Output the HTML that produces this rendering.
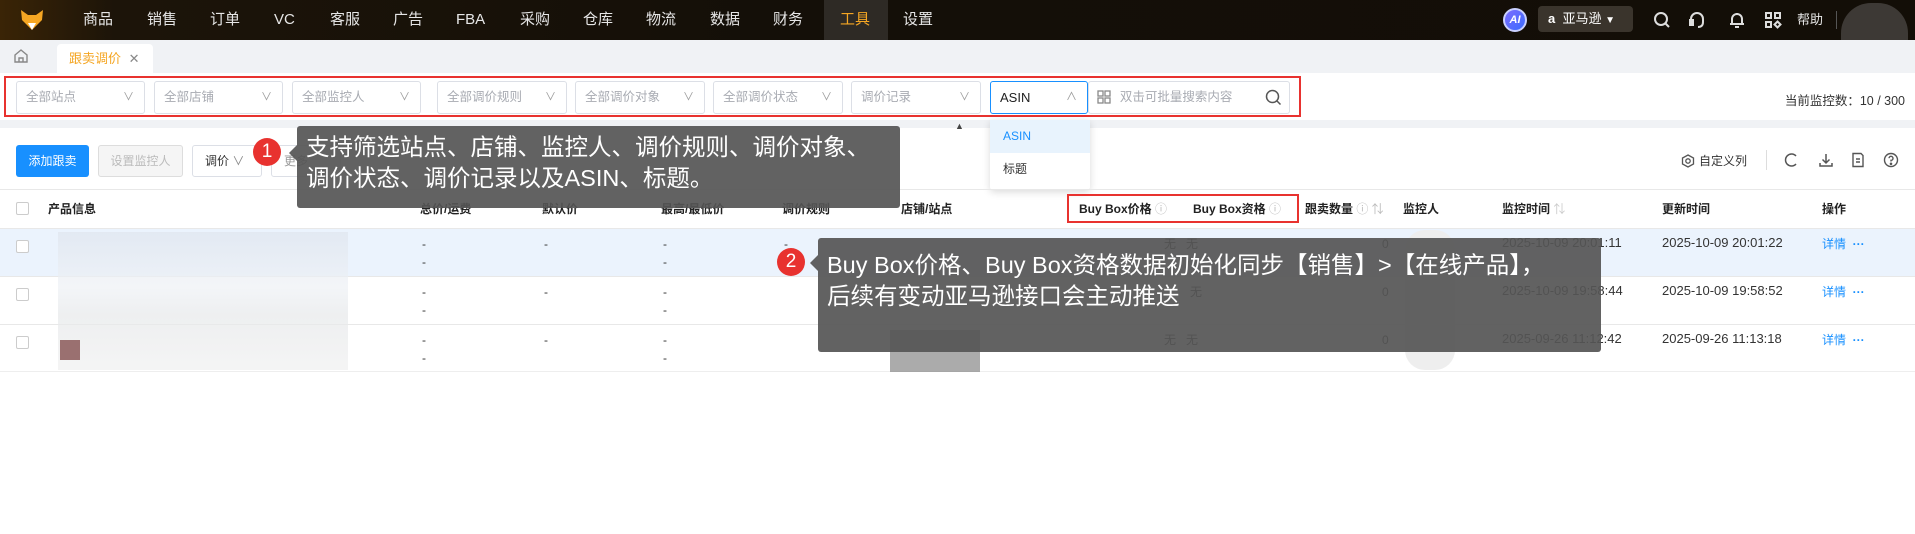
<!DOCTYPE html>
<html><head><meta charset="utf-8"><style>
*{box-sizing:border-box;margin:0;padding:0}
body{width:1915px;height:534px;overflow:hidden;background:#fff;font-family:"Liberation Sans","Noto Sans CJK SC",sans-serif;position:relative;color:#333}
.a{position:absolute}
.nav{left:0;top:0;width:1915px;height:40px;background:linear-gradient(90deg,#3a2406 0,#1c1409 6%,#140f08 40%,#130e07 100%)}
.ni{top:0;height:40px;line-height:40px;color:#e6e6e6;font-size:15px}
.tabs{left:0;top:40px;width:1915px;height:33px;background:#f0f2f5}
.sel{top:81px;height:33px;border:1px solid #dcdfe6;border-radius:3px;font-size:12.5px;color:#a8abb2;line-height:31px;padding-left:9px;background:#fff}
.sel i{position:absolute;right:10px;top:0;font-style:normal;color:#999;font-size:11px}
.th{top:200px;font-size:12px;font-weight:bold;color:#222}
.td{font-size:12px;color:#333;line-height:18px}
.tip{background:rgba(85,85,85,.92);color:#fff;font-size:23.5px;line-height:31px;border-radius:3px;white-space:nowrap}
.badge{width:28px;height:28px;border-radius:50%;background:#e8322f;color:#fff;font-size:19px;line-height:28px;text-align:center}
.cb{width:13px;height:13px;border:1px solid #ccc;border-radius:2px;background:#fff}
.blur{background:#e4e6ea}
</style></head><body>
<div class="a nav"></div>
<svg class="a" style="left:20px;top:8px" width="24" height="24" viewBox="0 0 24 24"><path d="M1 2 L8 7 L16 7 L23 2 L22 12 L12 22 L2 12Z" fill="#f5a623"/><path d="M8 15 L12 22 L16 15Z" fill="#fff"/></svg>
<div class="a ni" style="left:83px">商品</div>
<div class="a ni" style="left:147px">销售</div>
<div class="a ni" style="left:210px">订单</div>
<div class="a ni" style="left:274px">VC</div>
<div class="a ni" style="left:330px">客服</div>
<div class="a ni" style="left:393px">广告</div>
<div class="a ni" style="left:456px">FBA</div>
<div class="a ni" style="left:520px">采购</div>
<div class="a ni" style="left:583px">仓库</div>
<div class="a ni" style="left:646px">物流</div>
<div class="a ni" style="left:710px">数据</div>
<div class="a ni" style="left:773px">财务</div>
<div class="a" style="left:824px;top:0;width:64px;height:40px;background:#2e2a25"></div>
<div class="a ni" style="left:840px;color:#f5a623">工具</div>
<div class="a ni" style="left:903px">设置</div>
<div class="a" style="left:1503px;top:8px;width:24px;height:24px;border-radius:50%;background:linear-gradient(135deg,#7c6cff,#3a6bff);border:2px solid #c9d0ff;color:#fff;font-size:11px;font-weight:bold;text-align:center;line-height:20px;font-style:italic">AI</div>
<div class="a" style="left:1538px;top:6px;width:95px;height:26px;background:#3a342c;border-radius:4px;color:#fff;font-size:13px;line-height:26px;padding-left:10px"><b>a</b>&nbsp; 亚马逊 <span style="font-size:10px">▼</span></div>
<svg class="a" style="left:1653px;top:11px" width="18" height="18" viewBox="0 0 18 18" fill="none" stroke="#ddd" stroke-width="2"><circle cx="8" cy="8" r="6"/><path d="M12.5 12.5 L16 16"/></svg>
<svg class="a" style="left:1688px;top:11px" width="18" height="18" viewBox="0 0 18 18" fill="none" stroke="#ddd" stroke-width="2"><path d="M3 11 V8 a6 6 0 0 1 12 0 V11"/><rect x="2" y="9" width="3" height="5" fill="#ddd"/><path d="M15 11 Q15 16 10 16"/></svg>
<svg class="a" style="left:1728px;top:11px" width="18" height="18" viewBox="0 0 18 18" fill="none" stroke="#ddd" stroke-width="2"><path d="M4 13 V8 a5 5 0 0 1 10 0 V13 Z M2 13 H16 M9 2 V3 M7 16 H11"/></svg>
<svg class="a" style="left:1764px;top:11px" width="18" height="18" viewBox="0 0 18 18" fill="none" stroke="#ddd" stroke-width="2"><rect x="2" y="2" width="5" height="5"/><rect x="11" y="2" width="5" height="5"/><rect x="2" y="11" width="5" height="5"/><path d="M13.5 10.5 L16.5 13.5 L13.5 16.5 L10.5 13.5Z"/></svg>
<div class="a ni" style="left:1797px;font-size:13px">帮助</div>
<div class="a" style="left:1836px;top:11px;width:1px;height:18px;background:#555"></div>
<div class="a" style="left:1841px;top:3px;width:67px;height:37px;background:#3d3935;border-radius:30px 30px 0 0"></div>

<div class="a tabs"></div>
<svg class="a" style="left:13px;top:48px" width="16" height="16" viewBox="0 0 16 16" fill="none" stroke="#888" stroke-width="1.4"><path d="M2 7 L8 2 L14 7 V14 H2Z M6 14 V10 H10 V14"/></svg>
<div class="a" style="left:57px;top:44px;width:96px;height:29px;background:#fff;border-radius:4px 4px 0 0;color:#f5a623;font-size:13px;line-height:29px;padding-left:12px">跟卖调价 <span style="color:#888;margin-left:4px">✕</span></div>

<div class="a" style="left:0;top:73px;width:1915px;height:47px;background:#fff"></div>
<div class="a" style="left:4px;top:76px;width:1297px;height:41px;border:2px solid #e8322f"></div>
<div class="a sel" style="left:16px;width:129px">全部站点<i>∨</i></div>
<div class="a sel" style="left:154px;width:129px">全部店铺<i>∨</i></div>
<div class="a sel" style="left:292px;width:129px">全部监控人<i>∨</i></div>
<div class="a sel" style="left:437px;width:130px">全部调价规则<i>∨</i></div>
<div class="a sel" style="left:575px;width:130px">全部调价对象<i>∨</i></div>
<div class="a sel" style="left:713px;width:130px">全部调价状态<i>∨</i></div>
<div class="a sel" style="left:851px;width:130px">调价记录<i>∨</i></div>
<div class="a sel" style="left:1088px;width:202px;padding-left:10px">&nbsp;&nbsp;&nbsp;&nbsp;&nbsp;&nbsp;双击可批量搜索内容</div>
<svg class="a" style="left:1097px;top:90px" width="14" height="14" viewBox="0 0 14 14" fill="none" stroke="#888" stroke-width="1.3"><rect x="1" y="1" width="5" height="5"/><rect x="8" y="1" width="5" height="5"/><rect x="1" y="8" width="5" height="5"/><rect x="8" y="8" width="5" height="5"/></svg>
<svg class="a" style="left:1265px;top:89px" width="17" height="17" viewBox="0 0 17 17" fill="none" stroke="#555" stroke-width="1.5"><circle cx="7.5" cy="7.5" r="6"/><path d="M12 12 L15.5 15.5"/></svg>
<div class="a sel" style="left:990px;width:98px;border-color:#1890ff;color:#222;font-size:13px">ASIN<i>∧</i></div>
<div class="a" style="right:10px;top:90px;font-size:12.5px;color:#333">当前监控数：10 / 300</div>

<div class="a" style="left:0;top:120px;width:1915px;height:8px;background:#f0f2f5"></div>
<div class="a" style="left:990px;top:120px;width:100px;height:70px;background:#fff;box-shadow:0 2px 8px rgba(0,0,0,.15);border-radius:0 0 3px 3px"></div>
<div class="a" style="left:990px;top:120px;width:100px;height:33px;background:#e8f3fd;color:#1890ff;font-size:12px;line-height:33px;padding-left:13px">ASIN</div>
<div class="a" style="left:1003px;top:160px;font-size:12px;color:#333">标题</div>
<div class="a" style="left:955px;top:121px;font-size:9px;color:#444">▲</div>

<div class="a" style="left:16px;top:145px;width:73px;height:32px;background:#1890ff;border-radius:3px;color:#fff;font-size:12px;line-height:32px;text-align:center">添加跟卖</div>
<div class="a" style="left:98px;top:145px;width:85px;height:32px;border:1px solid #ddd;background:#f5f5f5;border-radius:3px;color:#bbb;font-size:12px;line-height:30px;text-align:center">设置监控人</div>
<div class="a" style="left:192px;top:145px;width:70px;height:32px;border:1px solid #dcdfe6;border-radius:3px;color:#333;font-size:12px;line-height:30px;padding-left:12px">调价 <span style="color:#888">∨</span></div>
<div class="a" style="left:271px;top:145px;width:70px;height:32px;border:1px solid #dcdfe6;border-radius:3px;color:#999;font-size:12px;line-height:30px;padding-left:12px">更多</div>

<svg class="a" style="left:1681px;top:154px" width="14" height="14" viewBox="0 0 14 14" fill="none" stroke="#555" stroke-width="1.3"><path d="M7 1 L12.5 4 V10 L7 13 L1.5 10 V4Z"/><circle cx="7" cy="7" r="2.2"/></svg>
<div class="a" style="left:1699px;top:152px;font-size:12px;color:#333">自定义列</div>
<div class="a" style="left:1766px;top:150px;width:1px;height:20px;background:#ddd"></div>
<svg class="a" style="left:1783px;top:152px" width="16" height="16" viewBox="0 0 16 16" fill="none" stroke="#555" stroke-width="1.5"><path d="M13 4 A6 6 0 1 0 13 12"/></svg>
<svg class="a" style="left:1818px;top:152px" width="16" height="16" viewBox="0 0 16 16" fill="none" stroke="#555" stroke-width="1.5"><path d="M8 2 V11 M4.5 7.5 L8 11 L11.5 7.5 M2 11 V14 H14 V11"/></svg>
<svg class="a" style="left:1850px;top:152px" width="16" height="16" viewBox="0 0 16 16" fill="none" stroke="#555" stroke-width="1.4"><path d="M3 1.5 H11 L13 3.5 V14.5 H3Z M6 7 H10 M6 10 H10"/></svg>
<svg class="a" style="left:1883px;top:152px" width="16" height="16" viewBox="0 0 16 16" fill="none" stroke="#555" stroke-width="1.4"><circle cx="8" cy="8" r="6.5"/><path d="M6 6.2 A2 2 0 1 1 8 8.3 V9.5"/><circle cx="8" cy="11.8" r=".6" fill="#555"/></svg>

<div class="a" style="left:0;top:189px;width:1915px;height:1px;background:#e8e8e8"></div>
<div class="a cb" style="left:16px;top:202px"></div>
<div class="a th" style="left:48px">产品信息</div>
<div class="a th" style="left:420px">总价/运费</div>
<div class="a th" style="left:542px">默认价</div>
<div class="a th" style="left:661px">最高/最低价</div>
<div class="a th" style="left:782px">调价规则</div>
<div class="a th" style="left:901px">店铺/站点</div>
<div class="a th" style="left:1079px">Buy Box价格 <span style="color:#bbb;font-weight:normal">ⓘ</span></div>
<div class="a th" style="left:1193px">Buy Box资格 <span style="color:#bbb;font-weight:normal">ⓘ</span></div>
<div class="a th" style="left:1305px">跟卖数量 <span style="color:#bbb;font-weight:normal">ⓘ ⇅</span></div>
<div class="a th" style="left:1403px">监控人</div>
<div class="a th" style="left:1502px">监控时间 <span style="color:#ccc;font-weight:normal">⇅</span></div>
<div class="a th" style="left:1662px">更新时间</div>
<div class="a th" style="left:1822px">操作</div>
<div class="a" style="left:1067px;top:194px;width:232px;height:29px;border:2px solid #e8322f"></div>

<div class="a" style="left:0;top:228px;width:1915px;height:48px;background:#ebf3fd;border-top:1px solid #e8e8e8"></div>
<div class="a" style="left:0;top:276px;width:1915px;height:1px;background:#e8e8e8"></div>
<div class="a" style="left:0;top:324px;width:1915px;height:1px;background:#e8e8e8"></div>
<div class="a" style="left:0;top:371px;width:1915px;height:1px;background:#eee"></div>

<div class="a blur" style="left:58px;top:232px;width:290px;height:138px;background:linear-gradient(#dfe5ee,#eef1f5 40%,#e6e8ea 60%,#f0f0f0);opacity:.7"></div>
<div class="a" style="left:60px;top:340px;width:20px;height:20px;background:#9a7070"></div>

<div class="a cb" style="left:16px;top:240px"></div>
<div class="a cb" style="left:16px;top:288px"></div>
<div class="a cb" style="left:16px;top:336px"></div>

<div class="a td" style="left:422px;top:235px">-<br>-</div>
<div class="a td" style="left:544px;top:235px">-</div>
<div class="a td" style="left:663px;top:235px">-<br>-</div>
<div class="a td" style="left:784px;top:235px">-</div>
<div class="a td" style="left:422px;top:283px">-<br>-</div>
<div class="a td" style="left:544px;top:283px">-</div>
<div class="a td" style="left:663px;top:283px">-<br>-</div>
<div class="a td" style="left:422px;top:331px">-<br>-</div>
<div class="a td" style="left:544px;top:331px">-</div>
<div class="a td" style="left:663px;top:331px">-<br>-</div>

<div class="a td" style="left:1164px;top:235px">无&nbsp;&nbsp;&nbsp;无</div>
<div class="a td" style="left:1190px;top:283px">无</div>
<div class="a td" style="left:1164px;top:331px">无&nbsp;&nbsp;&nbsp;无</div>
<div class="a td" style="left:1382px;top:235px">0</div>
<div class="a td" style="left:1382px;top:283px">0</div>
<div class="a td" style="left:1382px;top:331px">0</div>
<div class="a td" style="left:1502px;top:234px;font-size:13px">2025-10-09 20:01:11</div>
<div class="a td" style="left:1662px;top:234px;font-size:13px">2025-10-09 20:01:22</div>
<div class="a td" style="left:1502px;top:282px;font-size:13px">2025-10-09 19:58:44</div>
<div class="a td" style="left:1662px;top:282px;font-size:13px">2025-10-09 19:58:52</div>
<div class="a td" style="left:1502px;top:330px;font-size:13px">2025-09-26 11:12:42</div>
<div class="a td" style="left:1662px;top:330px;font-size:13px">2025-09-26 11:13:18</div>
<div class="a td" style="left:1822px;top:235px;color:#1890ff">详情 &nbsp;<b>···</b></div>
<div class="a td" style="left:1822px;top:283px;color:#1890ff">详情 &nbsp;<b>···</b></div>
<div class="a td" style="left:1822px;top:331px;color:#1890ff">详情 &nbsp;<b>···</b></div>

<div class="a blur" style="left:1405px;top:230px;width:50px;height:140px;background:#eee;border-radius:20px"></div>
<div class="a" style="left:890px;top:330px;width:90px;height:42px;background:#888;opacity:.7"></div>

<div class="a tip" style="left:297px;top:126px;width:603px;height:82px;padding:6px 0 0 9px">支持筛选站点、店铺、监控人、调价规则、调价对象、<br>调价状态、调价记录以及ASIN、标题。</div>
<div class="a" style="left:289px;top:145px;width:0;height:0;border:8px solid transparent;border-right-color:rgba(85,85,85,.92);border-left:0"></div>
<div class="a badge" style="left:253px;top:138px">1</div>

<div class="a tip" style="left:818px;top:238px;width:783px;height:114px;padding:12px 0 0 9px">Buy Box价格、Buy Box资格数据初始化同步【销售】>【在线产品】，<br>后续有变动亚马逊接口会主动推送</div>
<div class="a" style="left:810px;top:255px;width:0;height:0;border:8px solid transparent;border-right-color:rgba(85,85,85,.92);border-left:0"></div>
<div class="a badge" style="left:777px;top:248px">2</div>
</body></html>
